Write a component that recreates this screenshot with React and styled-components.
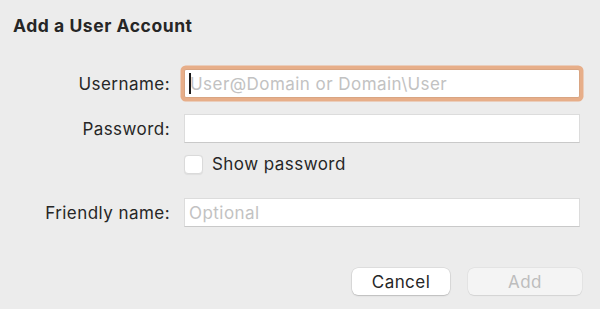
import React from "react";
import styled, { createGlobalStyle } from "styled-components";

const Global = createGlobalStyle`
  html, body { margin: 0; padding: 0; background: #ececec; }
  body { font-family: Inter, "Noto Sans", "Liberation Sans", sans-serif; color: #262626; }
  * { box-sizing: border-box; }
`;

const Page = styled.div`
  width: 600px;
  height: 309px;
  padding: 14px 18px 0 13px;
  background: #ececec;
`;

const Title = styled.h1`
  margin: 0;
  font-size: 17.5px;
  line-height: 24px;
  font-weight: 700;
  color: #262626;
  letter-spacing: 0.55px;
`;

const Form = styled.div`
  display: flex;
  flex-direction: column;
`;

const Row = styled.div`
  display: grid;
  grid-template-columns: 157px 396px;
  column-gap: 14px;
  align-items: center;
  margin-top: ${(p) => p.$top}px;
`;

const Label = styled.label`
  text-align: right;
  font-size: 17px;
  letter-spacing: 0.45px;
  color: #262626;
  white-space: nowrap;
`;

const FieldWrap = styled.div`
  position: relative;
  height: ${(p) => p.$h || 29}px;
  background: #fff;
  border: 1px solid ${(p) => (p.$focused ? "#d9a582" : "#dcdcdc")};
  border-bottom-color: ${(p) => (p.$focused ? "#d9a582" : "#c9c9c9")};
  border-radius: ${(p) => (p.$focused ? 2 : 0)}px;
  box-shadow: ${(p) => (p.$focused ? "0 0 0 3.5px #e7ae89" : "none")};
`;

const Input = styled.input`
  width: 100%;
  height: 100%;
  border: none;
  outline: none;
  background: transparent;
  padding: 0 0 0 ${(p) => p.$pad || 4}px;
  font-family: inherit;
  font-size: 17px;
  letter-spacing: 0.45px;
  color: #262626;
  &::placeholder { color: #c2c2c2; }
`;

const Caret = styled.span`
  position: absolute;
  left: 4px;
  top: 3px;
  width: 1.5px;
  height: 21px;
  background: #1a1a1a;
`;

const CheckRow = styled.label`
  display: flex;
  align-items: center;
  gap: 9px;
  font-size: 17px;
  letter-spacing: 0.45px;
  color: #262626;
`;

const Box = styled.span`
  width: 19px;
  height: 19px;
  border-radius: 4px;
  background: #fff;
  border: 1px solid #dadada;
  box-shadow: 0 0.5px 1px rgba(0, 0, 0, 0.06);
`;

const Buttons = styled.div`
  display: flex;
  justify-content: flex-end;
  gap: 18px;
  margin-top: 41px;
`;

const Button = styled.button`
  width: ${(p) => p.$w}px;
  height: 27px;
  border: none;
  border-radius: 6px;
  font-family: inherit;
  font-size: 17px;
  letter-spacing: 0.45px;
  background: ${(p) => (p.$disabled ? "#f4f4f4" : "#ffffff")};
  color: ${(p) => (p.$disabled ? "#bdbdbd" : "#262626")};
  box-shadow: ${(p) =>
    p.$disabled
      ? "0 0 0 0.5px rgba(0,0,0,0.06), 0 0.5px 1px rgba(0,0,0,0.08)"
      : "0 0 0 0.5px rgba(0,0,0,0.12), 0 1px 1.5px rgba(0,0,0,0.15)"};
  padding: 0;
`;

export default function App() {
  return (
    <Page>
      <Global />
      <Title>Add a User Account</Title>
      <Form>
        <Row $top={31}>
          <Label>Username:</Label>
          <FieldWrap $focused>
            <Caret />
            <Input $pad={5} placeholder="User@Domain or Domain\User" />
          </FieldWrap>
        </Row>
        <Row $top={16}>
          <Label>Password:</Label>
          <FieldWrap>
            <Input type="password" />
          </FieldWrap>
        </Row>
        <Row $top={11}>
          <span />
          <CheckRow>
            <Box />
            Show password
          </CheckRow>
        </Row>
        <Row $top={24}>
          <Label>Friendly name:</Label>
          <FieldWrap>
            <Input placeholder="Optional" />
          </FieldWrap>
        </Row>
        <Buttons>
          <Button $w={98}>Cancel</Button>
          <Button $w={114} $disabled>Add</Button>
        </Buttons>
      </Form>
    </Page>
  );
}
